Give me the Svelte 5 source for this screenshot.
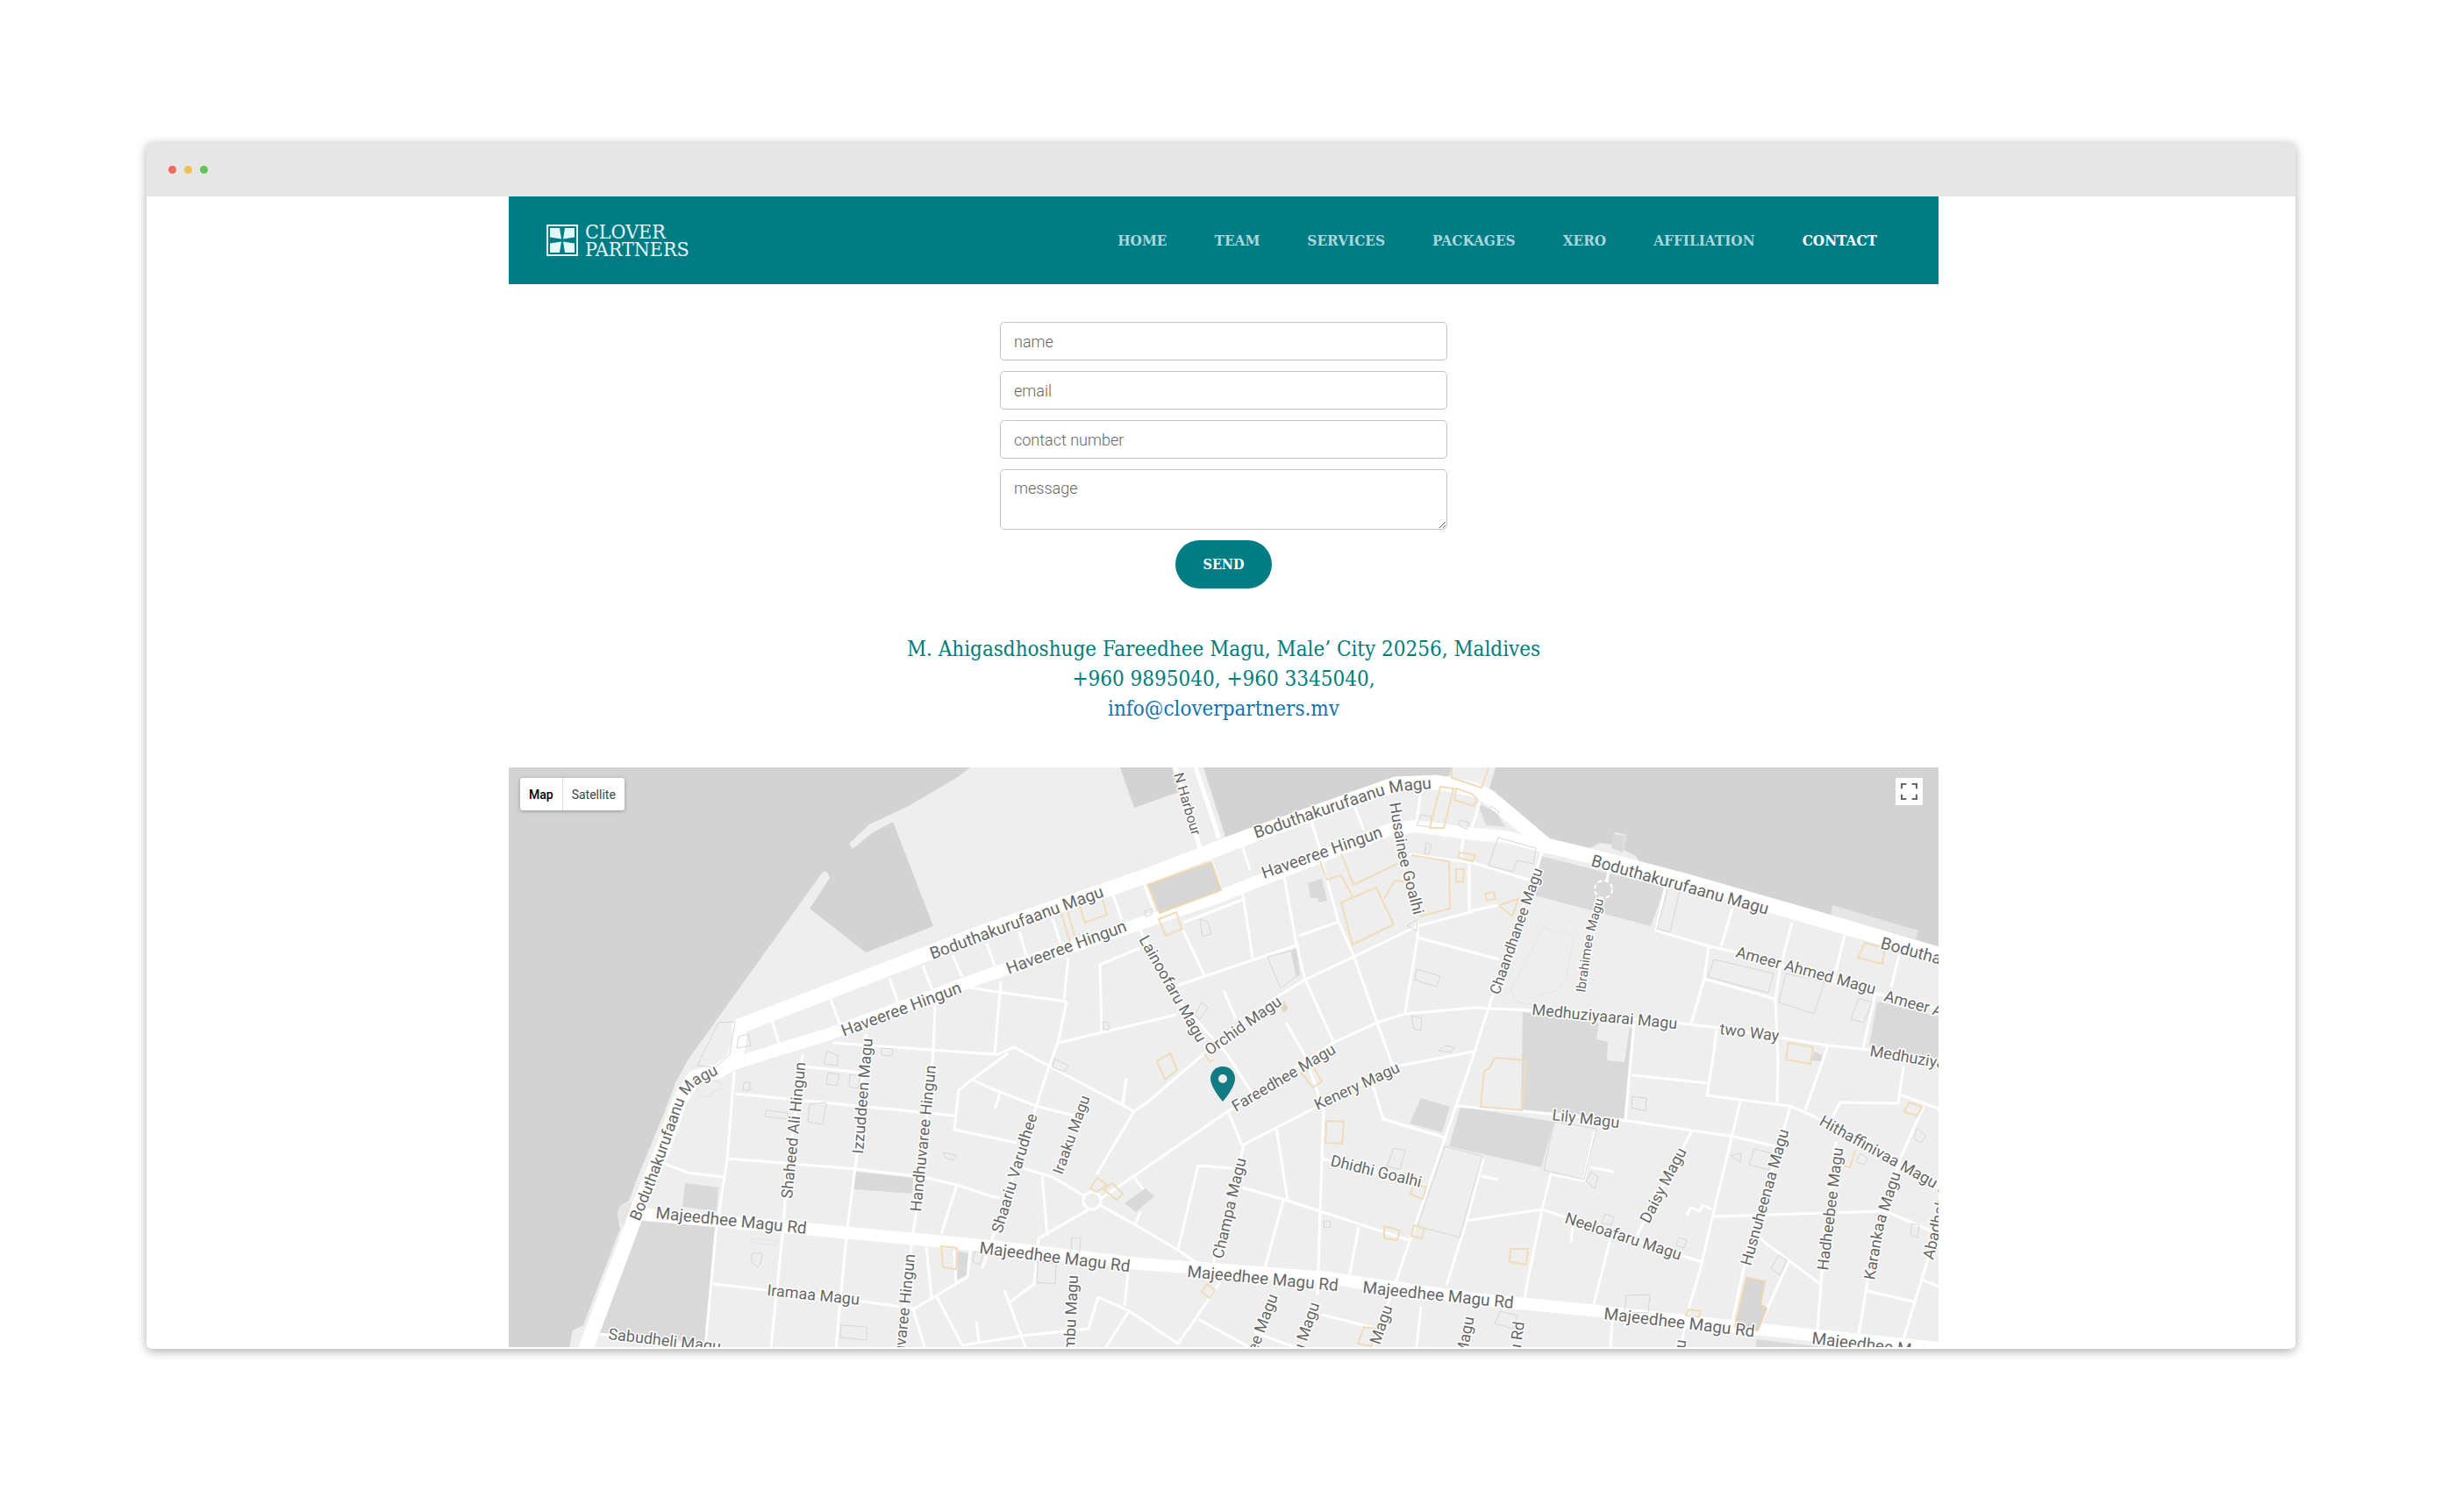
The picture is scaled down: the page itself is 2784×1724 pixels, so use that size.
<script>
  const links = ["Home", "Team", "Services", "Packages", "Xero", "Affiliation", "Contact"];
  const current = "Contact";

  let name = "";
  let email = "";
  let phone = "";
  let message = "";
  let mapType = "Map";

  // open water around the island
  const water = [
    "0,0 526,0 512,11 454,45 411,65 388,87 392,93 414,75 438,62 484,181 407,211 343,161 366,126 363,119 358,119 204,334 190,360 176,397 147,467 137,494 127,500 124,508 127,526 85,636 73,642 69,661 0,661",
    "697,0 713,46 764,28 756,0",
    "792,0 817,79 1015,10 1072,10 1075,0",
    "1125,0 1118,24 1185,84 1229,94 1244,86 1258,88 1261,74 1274,77 1271,94 1285,101 1292,112 1519,174 1630,207 1630,0",
  ];

  const parks = [
    "151,517 236,524 224,656 97,644",
    "201,474 239,479 237,506 198,501",
    "395,461 461,468 460,486 394,481",
    "512,552 526,554 522,579 511,584",
    "911,132 927,127 933,152 924,154 922,149 914,149",
    "892,209 898,206 902,236 899,239",
    "1177,101 1318,137 1302,181 1170,146",
    "1156,279 1243,292 1240,310 1253,313 1252,334 1272,336 1278,296 1281,297 1271,403 1154,390",
    "1085,387 1192,404 1177,456 1072,432",
    "1040,377 1073,387 1064,416 1027,406",
    "726,480 736,489 715,507 702,497",
    "1560,267 1630,284 1630,333 1551,317",
    "1422,652 1500,661 1422,661",
    "1260,76 1273,78 1270,97 1257,92",
    "1488,324 1498,328 1496,335 1486,334",
    "1104,40 1126,52 1136,68 1114,66",
  ];

  const streets = [
    "300,289 309,317",
    "367,264 379,297",
    "434,240 444,269",
    "472,226 483,254",
    "506,214 517,239",
    "545,201 554,226",
    "582,187 590,214",
    "620,172 629,201",
    "689,146 699,174",
    "724,132 736,164",
    "801,106 813,142",
    "836,89 845,117",
    "915,61 925,94",
    "964,44 975,72",
    "1040,24 1035,64",
    "1107,40 1096,76",
    "486,271 484,324 470,467 461,531 451,614",
    "369,314 550,327",
    "526,251 550,255 636,267",
    "407,304 397,441 386,524 373,661",
    "335,327 315,494 313,524 299,661",
    "257,347 249,447 236,531 224,661",
    "258,372 508,397",
    "335,341 401,348",
    "250,446 397,458 472,467 511,476 550,489 560,491",
    "178,452 204,462 244,467",
    "569,326 528,356 513,368 508,413 579,428",
    "528,356 550,366 601,386 644,397",
    "511,476 493,532",
    "233,589 295,596 397,608 461,617",
    "526,551 523,581 461,618 474,661",
    "476,547 482,604",
    "488,604 517,659 586,648 661,640 672,604 706,619 763,657 786,624 811,587",
    "508,551 510,587",
    "533,632 536,654",
    "104,646 236,664",
    "561,244 554,327",
    "638,217 633,264",
    "636,267 626,314 616,341 601,387 540,571",
    "719,206 674,225 676,301",
    "627,314 761,282",
    "719,184 760,262 819,327 847,371",
    "761,249 901,202",
    "769,186 793,237",
    "769,177 836,151",
    "836,139 848,217",
    "884,124 897,197 908,242 940,312",
    "901,192 946,176",
    "925,100 946,176 963,214 990,291 1008,341",
    "1100,164 1036,181 963,216 908,242 872,264 792,327 729,381 713,392 670,464",
    "1036,174 1036,194 1022,279",
    "1036,194 1100,211 1129,219",
    "1167,277 1100,274 1022,281 990,291 940,314 820,392 711,467 676,491",
    "815,254 829,287",
    "886,291 908,329 929,391 927,447 922,601",
    "1026,99 1100,109 1172,131",
    "1095,111 1095,164 1133,156",
    "1088,81 1085,107",
    "540,326 558,327 576,319 617,341 713,392",
    "704,354 700,384",
    "560,372 554,389",
    "586,457 620,467 665,494 715,522 761,549 790,569",
    "608,466 614,534",
    "665,502 604,537 599,589 572,609",
    "565,596 589,661",
    "706,577 702,614",
    "706,621 681,661",
    "786,629 844,661",
    "713,467 723,481",
    "720,507 714,522",
    "826,457 786,454 763,549",
    "820,392 836,431 931,382 1011,341 1100,324",
    "838,431 804,564",
    "875,411 888,494",
    "836,479 888,494 1026,539",
    "883,494 861,574",
    "969,524 958,582",
    "985,362 997,401 1067,422",
    "927,446 1045,477",
    "1178,97 1117,274 1099,331 1067,424 1011,587 985,661",
    "1079,386 1154,392 1269,402 1349,414 1397,421 1444,432",
    "1111,446 1092,517 1069,591",
    "1040,614 1035,661",
    "927,624 986,639",
    "850,644 896,661",
    "1319,134 1308,186 1369,204 1401,211 1555,257 1630,275",
    "1395,161 1382,204",
    "1463,177 1449,231 1444,264 1447,334 1446,382",
    "1523,191 1511,241",
    "1585,214 1576,251",
    "1368,204 1363,241 1348,292",
    "1363,241 1444,264",
    "1167,277 1329,291 1381,297 1504,317 1551,322 1630,337",
    "1377,299 1374,324 1366,374 1404,379 1461,386 1490,399 1630,479",
    "1283,291 1279,334 1273,404",
    "1281,351 1367,360",
    "1558,257 1544,321",
    "1504,317 1478,391",
    "1506,404 1518,382 1584,383 1590,341",
    "1586,373 1630,389",
    "1613,386 1586,447 1549,587 1539,647",
    "1404,381 1372,514 1358,574 1345,617 1336,661",
    "1349,414 1286,534",
    "1461,387 1408,571 1395,631",
    "1513,427 1497,577 1492,641",
    "1374,512 1569,506 1630,532",
    "1372,504 1361,499 1358,506 1347,502 1343,511",
    "1426,537 1495,589",
    "1460,562 1426,637",
    "1549,597 1601,609",
    "1630,520 1617,564 1590,652",
    "1611,584 1630,592",
    "1238,414 1226,471 1188,464 1178,504 1158,604",
    "1090,517 1178,504 1258,531 1360,564",
    "1233,456 1260,461",
    "1108,466 1128,470",
    "1213,524 1211,542",
    "1256,537 1237,612",
    "1258,631 1256,661",
  ];

  const outlines = [
    "239,291 258,290 252,327 236,342 215,340",
    "262,307 273,304 276,317 260,320",
    "268,359 275,359 275,368 267,368",
    "293,391 318,394 318,401 292,398",
    "343,384 362,382 358,407 341,404",
    "363,324 375,328 375,340 359,338",
    "364,348 377,350 374,363 362,361",
    "389,350 400,352 398,366 388,364",
    "425,320 438,321 437,329 425,328",
    "495,439 510,442 507,448 498,445",
    "277,554 289,554 287,566 283,570 277,564",
    "379,636 408,638 408,653 378,650",
    "531,552 541,554 537,567 529,564",
    "642,536 652,537 650,560 640,559",
    "603,563 624,566 623,589 602,587",
    "622,332 638,340 634,347 620,342",
    "788,173 797,176 801,190 791,193",
    "865,216 892,209 898,238 880,252",
    "677,290 684,291 684,299 678,299",
    "790,268 797,274 788,287 782,282",
    "725,164 734,161 733,168 726,170",
    "1040,54 1052,56 1050,68 1035,66",
    "1046,86 1052,88 1049,99 1044,98",
    "1084,60 1095,63 1092,70 1083,66",
    "1128,80 1171,92 1168,110 1149,106 1145,119 1117,112",
    "1120,44 1129,51 1122,60 1113,55",
    "1322,136 1335,140 1324,188 1309,184",
    "1374,219 1442,235 1436,257 1367,239",
    "1456,235 1500,244 1488,281 1448,268",
    "1539,263 1554,268 1545,291 1530,287",
    "1035,230 1062,238 1058,250 1033,242",
    "1024,180 1036,174 1035,187",
    "1029,283 1041,286 1040,300 1032,298",
    "1067,317 1078,319 1074,325 1060,323",
    "1009,434 1022,437 1016,458 1001,455",
    "1067,432 1110,443 1084,536 1036,523",
    "930,517 937,518 936,525 929,524",
    "1192,404 1240,412 1226,470 1180,459",
    "1281,375 1297,377 1296,392 1280,388",
    "1420,435 1440,440 1437,459 1414,453",
    "1393,443 1405,440 1404,450",
    "1234,461 1242,467 1238,480 1228,472",
    "1250,509 1260,513 1257,522 1246,520",
    "1334,536 1343,539 1340,548 1331,545",
    "1448,556 1457,562 1449,579 1439,571",
    "1274,602 1301,601 1299,622 1272,621",
    "1130,620 1150,625 1145,640 1124,634",
    "1605,412 1616,420 1610,428 1602,424",
    "1541,440 1549,446 1545,453 1536,450",
    "1600,520 1608,522 1606,536 1598,532",
  ];

  const pale = [
    "1180,182 1196,190 1205,186 1214,194 1206,240 1196,254 1178,258 1166,270 1150,268 1142,254",
    "214,364 226,356 240,358 243,366 232,370 230,376 216,374",
    "276,537 306,540 304,545 277,542",
  ];

  const landmarks = [
    "741,173 761,165 767,184 749,192",
    "949,154 989,137 1009,179 962,202",
    "1062,22 1077,24 1066,69 1050,69",
    "1080,24 1098,30 1104,36 1100,44 1078,37",
    "1084,97 1102,100 1099,107 1083,103",
    "1080,116 1089,116 1088,131 1080,130",
    "1113,144 1123,142 1125,150 1115,152",
    "1129,157 1151,150 1144,170",
    "739,335 754,326 762,345 748,356",
    "904,349 917,341 927,358 917,365",
    "932,403 952,404 950,429 931,428",
    "663,480 671,468 682,476 670,484",
    "678,481 688,474 700,486 693,493",
    "796,589 805,596 799,605 790,598",
    "1032,475 1046,478 1042,492 1028,487",
    "998,523 1016,528 1013,539 998,537",
    "1032,522 1044,526 1041,537 1029,534",
    "975,638 988,640 984,660 968,657",
    "493,546 511,548 510,572 495,570",
    "1124,331 1160,334 1155,391 1108,387 1112,346 1118,343",
    "1142,549 1162,549 1160,567 1141,564",
    "1345,618 1359,620 1357,627 1342,625",
    "1546,200 1569,206 1566,224 1538,217",
    "1459,314 1487,319 1484,338 1456,333",
    "1596,382 1611,387 1606,397 1591,393",
  ];

  // boundaries that run into a street and stay open
  const fences = [
    "651,158 657,177 682,168 677,151",
    "628,161 640,199",
    "636,160 647,199",
    "925,107 933,128 949,123 962,147",
    "949,98 963,134 1013,110",
    "998,150 1010,129 1022,130",
    "1029,100 1072,107 1073,161 1038,170",
    "1075,0 1075,12 1109,23 1117,0",
    "793,326 799,336 804,333",
    "1535,436 1529,456 1522,454",
  ];

  // each label runs along its own baseline
  const labels = [
    { text: "Boduthakurufaanu Magu", size: 18, d: "M149 518L167 474L185 424L199 384Q205 368 218 360L262 338" },
    { text: "Boduthakurufaanu Magu", size: 19, d: "M483 219L698 140" },
    { text: "Boduthakurufaanu Magu", size: 19, d: "M852 81L990 34Q1010 27 1030 26L1080 22" },
    { text: "Boduthakurufaanu Magu", size: 19, d: "M1233 112L1460 175" },
    { text: "Boduthakurufaanu Magu", size: 19, d: "M1563 206L1790 268" },
    { text: "Haveeree Hingun", size: 19, d: "M382 307L540 248" },
    { text: "Haveeree Hingun", size: 19, d: "M570 236L728 178" },
    { text: "Haveeree Hingun", size: 19, d: "M861 127L1020 71" },
    { text: "N Harbour", size: 16, d: "M758 8L784 96" },
    { text: "Husainee Goalhi", size: 18, d: "M1004 41L1014 101L1036 186" },
    { text: "Lainoofaru Magu", size: 18, d: "M718 196L760 270L800 340" },
    { text: "Orchid Magu", size: 18, d: "M799 329L900 257" },
    { text: "Fareedhee Magu", size: 18, d: "M829 393L964 313" },
    { text: "Kenery Magu", size: 18, d: "M922 391L1040 336" },
    { text: "Champa Magu", size: 18, d: "M814 561L846 424" },
    { text: "Iraaku Magu", size: 17, d: "M631 465L672 351" },
    { text: "Shaariu Varudhee", size: 18, d: "M562 532L608 379" },
    { text: "Shaheed Ali Hingun", size: 18, d: "M323 492L341 310" },
    { text: "Izzuddeen Magu", size: 18, d: "M404 441L417 281" },
    { text: "Handhuvaree Hingun", size: 18, d: "M470 507L489 321" },
    { text: "Handhuvaree Hingun", size: 18, d: "M446 722L466 530" },
    { text: "Majeedhee Magu Rd", size: 19, d: "M167 514L369 535" },
    { text: "Majeedhee Magu Rd", size: 19, d: "M536 554L738 579" },
    { text: "Majeedhee Magu Rd", size: 19, d: "M773 581L976 600" },
    { text: "Majeedhee Magu Rd", size: 19, d: "M973 599L1175 620" },
    { text: "Majeedhee Magu Rd", size: 19, d: "M1248 629L1449 653" },
    { text: "Majeedhee Magu Rd", size: 19, d: "M1485 657L1687 681" },
    { text: "Iramaa Magu", size: 18, d: "M294 602L420 615" },
    { text: "Sabudheli Magu", size: 18, d: "M113 652L270 670" },
    { text: "mbu Magu", size: 18, d: "M645 665L650 560" },
    { text: "ee Magu", size: 18, d: "M853 668L884 584" },
    { text: "u Magu", size: 18, d: "M905 669L931 593" },
    { text: "Magu", size: 18, d: "M993 659L1016 591" },
    { text: "Magu", size: 18, d: "M1092 672L1105 604" },
    { text: "u Rd", size: 18, d: "M1153 668L1162 603" },
    { text: "u", size: 18, d: "M1341 663L1344 640" },
    { text: "Chaandhanee Magu", size: 17, d: "M1129 260L1190 85" },
    { text: "Ibrahimee Magu", size: 15, d: "M1227 257L1236 195L1254 130" },
    { text: "Ameer Ahmed Magu", size: 18, d: "M1398 216L1590 268" },
    { text: "Ameer Ahmed Magu", size: 18, d: "M1567 266L1760 320" },
    { text: "Medhuziyaarai Magu", size: 18, d: "M1166 282L1360 301" },
    { text: "Medhuziyaarai Magu", size: 18, d: "M1551 329L1740 361" },
    { text: "two Way", size: 18, d: "M1380 304L1470 315" },
    { text: "Lily Magu", size: 18, d: "M1189 402L1290 414" },
    { text: "Daisy Magu", size: 18, d: "M1300 521L1353 418" },
    { text: "Neeloafaru Magu", size: 18, d: "M1203 519L1360 570" },
    { text: "Husnuheenaa Magu", size: 18, d: "M1416 569L1465 395" },
    { text: "Hadheebee Magu", size: 18, d: "M1504 574L1524 412" },
    { text: "Hithaffinivaa Magu", size: 18, d: "M1493 407L1660 500" },
    { text: "Karankaa Magu", size: 18, d: "M1557 585L1568 522L1594 442" },
    { text: "Abadhah Magu", size: 18, d: "M1624 562L1650 450" },
    { text: "Dhidhi Goalhi", size: 18, d: "M936 454L1060 484" },
  ];
</script>

<main class="stage">
  <div class="browser">
    <div class="titlebar">
      <span class="dot red"></span>
      <span class="dot yellow"></span>
      <span class="dot green"></span>
    </div>

    <div class="page">
      <header class="header">
        <a class="logo" href="#home">
          <svg class="logo-mark" viewBox="0 0 36 36" aria-hidden="true">
            <rect x="1" y="1" width="34" height="34" fill="none" stroke="currentColor" stroke-width="2" />
            <path d="M4 4h11l2 12.500L4 14.500zM32 4H21l-2 12.500L32 14.500zM4 32h11l2-12.500L4 21.500zM32 32H21l-2-12.500L32 21.500z" fill="currentColor" />
          </svg>
          <span class="logo-text">CLOVER<br />PARTNERS</span>
        </a>
        <nav class="nav">
          {#each links as link}
            <a href="#{link.toLowerCase()}" class:active={link === current}>{link}</a>
          {/each}
        </nav>
      </header>

      <form class="form" on:submit|preventDefault>
        <input type="text" placeholder="name" aria-label="name" bind:value={name} />
        <input type="email" placeholder="email" aria-label="email" bind:value={email} />
        <input type="tel" placeholder="contact number" aria-label="contact number" bind:value={phone} />
        <textarea placeholder="message" aria-label="message" bind:value={message}></textarea>
        <button class="send" type="submit">Send</button>
      </form>

      <address class="address">
        M. Ahigasdhoshuge Fareedhee Magu, Male’ City 20256, Maldives<br />
        +960 9895040, +960 3345040,<br />
        <a href="mailto:info@cloverpartners.mv">info@cloverpartners.mv</a>
      </address>

      <div class="map">
        <svg class="map-canvas" viewBox="0 0 1630 661" role="img" aria-label="Street map of Male’">
          <rect class="land" width="1630" height="661" />
          {#each water as points}
            <polygon class="water" {points} />
          {/each}
          <polygon class="jetty" points="1509,157 1607,186 1604,196 1507,169" />
          <circle class="jetty" cx="138" cy="510" r="14" />
          {#each parks as points}
            <polygon class="park" {points} />
          {/each}
          {#each pale as points}
            <polygon class="pale" {points} />
          {/each}
          {#each streets as points}
            <polyline class="street" {points} />
          {/each}
          <polyline class="quay" points="760,0 788,91" />
          <polyline class="quay" points="783,0 810,81" />
          <polyline class="road" points="219,354 262,336 365,304 540,239 711,181 811,147 861,127 1004,71 1033,67 1100,76 1136,79 1183,91" />
          <polyline class="road" points="147,509 347,527 550,546 719,566 790,571 933,582 1100,606 1233,619 1411,639 1483,647 1630,662" />
          <polyline class="road main" points="1630,213 1483,170 1340,129 1233,101 1183,89 1118,34 1100,25 1058,17 1011,19 851,76 729,123 540,188 263,295 262,316 256,334 240,346 211,354 195,380 176,434 147,504 140,524 86,668" />
          <circle class="roundabout" cx="665" cy="494" r="10" />
          <circle class="roundabout dashed" cx="1248" cy="139" r="10" />
          <polyline class="street" points="1252,129 1254,118" />
          {#each outlines as points}
            <polygon class="building" {points} />
          {/each}
          {#each landmarks as points}
            <polygon class="landmark" {points} />
          {/each}
          {#each fences as points}
            <polyline class="landmark" {points} />
          {/each}
          <polygon class="pitch" points="729,134 801,108 812,140 742,166" />
          <polygon class="pitch" points="1411,582 1432,586 1427,612 1434,617 1424,642 1398,637" />
          <polygon class="kiosk" points="879,270 884,267 889,275 883,280" />
          {#each labels as label, i}
            <path id="street-{i}" d={label.d} fill="none" />
            <text class="label" font-size={label.size}>
              <textPath href="#street-{i}">{label.text}</textPath>
            </text>
          {/each}
          <path class="pin" d="M814 341c-8 0-14 6-14 14 0 10 14 26 14 26s14-16 14-26c0-8-6-14-14-14z" />
          <circle cx="814" cy="355" r="5" fill="#eee" />
        </svg>

        <div class="map-type">
          {#each ["Map", "Satellite"] as type}
            <button type="button" class:selected={mapType === type} on:click={() => (mapType = type)}>{type}</button>
          {/each}
        </div>
        <button class="fullscreen" type="button" aria-label="Toggle fullscreen view">
          <svg viewBox="0 0 18 18" aria-hidden="true">
            <path d="M0 0v6h2V2h4V0zM16 0h-4v2h4v4h2V0zM16 16h-4v2h6v-6h-2zM2 12H0v6h6v-2H2z" />
          </svg>
        </button>
      </div>
    </div>
  </div>
</main>

<style>
  :global(body) {
    background-color: #fff;
  }

  .stage {
    padding: 162px 6%;
    font-family: "Roboto", sans-serif;
  }

  .browser {
    background: #fff;
    border-radius: 6px;
    overflow: hidden;
    box-shadow: 0 3px 12px rgba(0, 0, 0, 0.32);
    padding-bottom: 2px;
  }

  .titlebar {
    display: flex;
    align-items: center;
    gap: 9px;
    height: 62px;
    padding: 0 25px;
    background: #e6e6e6;
  }

  .dot {
    width: 9px;
    height: 9px;
    border-radius: 50%;
  }

  .red {
    background: #ed6a5e;
  }

  .yellow {
    background: #f5bf4f;
  }

  .green {
    background: #61c554;
  }

  .page {
    max-width: 1630px;
    margin: 0 auto;
    padding-left: 6px;
  }

  .header {
    display: flex;
    align-items: center;
    justify-content: space-between;
    height: 100px;
    padding: 0 70px 0 43px;
    background: #007c85;
    font-family: "Roboto Slab", "DejaVu Serif Condensed", "DejaVu Serif", serif;
  }

  .logo {
    display: flex;
    align-items: center;
    gap: 8px;
    color: #e4f6f7;
    text-decoration: none;
  }

  .logo-mark {
    width: 36px;
    height: 36px;
  }

  .logo-text {
    font-size: 23px;
    line-height: 20px;
  }

  .nav {
    display: flex;
    gap: 54px;
  }

  .nav a {
    color: #a9d7da;
    font-size: 17px;
    font-weight: 700;
    text-decoration: none;
    text-transform: uppercase;
  }

  .nav a.active {
    color: #fff;
  }

  .form {
    display: flex;
    flex-direction: column;
    align-items: center;
    gap: 12px;
    width: 510px;
    margin: 0 auto;
    padding-top: 43px;
  }

  .form input,
  .form textarea {
    box-sizing: border-box;
    width: 100%;
    height: 44px;
    padding: 0 15px;
    border: 1px solid #c4c4c4;
    border-radius: 5px;
    background: #fff;
    color: #555;
    font: 300 18px/24px "Roboto", sans-serif;
  }

  .form textarea {
    display: block;
    height: 69px;
    padding: 9px 15px;
    resize: vertical;
  }

  .form ::placeholder {
    color: #666;
    opacity: 1;
  }

  .send {
    height: 55px;
    width: 110px;
    border: 0;
    border-radius: 28px;
    background: #007c85;
    color: #fff;
    font: 700 16px "Roboto Slab", "DejaVu Serif Condensed", "DejaVu Serif", serif;
    text-transform: uppercase;
  }

  .address {
    padding: 52px 0 50px;
    color: #007c7c;
    font: 400 24px/34px "Roboto Slab", "DejaVu Serif Condensed", "DejaVu Serif", serif;
    text-align: center;
  }

  .address a {
    color: #1173b0;
    text-decoration: none;
  }

  .map {
    position: relative;
  }

  .map-canvas {
    display: block;
    width: 100%;
  }

  .land {
    fill: #eee;
  }

  .water {
    fill: #d3d3d3;
  }

  .jetty {
    fill: #e6e6e6;
  }

  .park {
    fill: #d9d9d9;
  }

  .pale {
    fill: none;
    stroke: #e4e4e4;
  }

  .street,
  .quay,
  .road {
    fill: none;
    stroke: #fff;
    stroke-width: 3px;
    stroke-linejoin: round;
  }

  .quay {
    stroke-width: 5px;
  }

  .road {
    stroke-width: 14px;
  }

  .main {
    stroke-width: 17px;
  }

  .roundabout {
    fill: #eee;
    stroke: #fff;
    stroke-width: 3px;
  }

  .dashed {
    fill: #d9d9d9;
    stroke-width: 2px;
    stroke-dasharray: 5 3;
  }

  .building {
    fill: none;
    stroke: #d6d6d6;
  }

  .landmark {
    fill: none;
    stroke: #f0dcb8;
    stroke-width: 2px;
  }

  .pitch {
    fill: #d6d6d6;
    stroke: #eed6ac;
    stroke-width: 2px;
  }

  .kiosk {
    fill: #e6d5c0;
  }

  .label {
    fill: #666;
    stroke: #fff;
    stroke-width: 3px;
    stroke-linejoin: round;
    paint-order: stroke;
    font-family: "Roboto", sans-serif;
  }

  .pin {
    fill: #127b84;
  }

  .map-type {
    position: absolute;
    top: 12px;
    left: 13px;
    display: flex;
    border-radius: 3px;
    background: #fff;
    box-shadow: 0 1px 4px rgba(0, 0, 0, 0.3);
  }

  .map-type button {
    height: 37px;
    padding: 0 10px;
    border: 0;
    background: none;
    color: #444;
    font: 400 14px "Roboto", sans-serif;
  }

  .map-type button + button {
    border-left: 1px solid #ddd;
  }

  .map-type .selected {
    color: #000;
    font-weight: 500;
  }

  .fullscreen {
    position: absolute;
    top: 12px;
    right: 18px;
    width: 31px;
    height: 31px;
    padding: 6px;
    border: 0;
    background: #fff;
  }

  .fullscreen svg {
    display: block;
    width: 19px;
    height: 19px;
    fill: #666;
  }
</style>
